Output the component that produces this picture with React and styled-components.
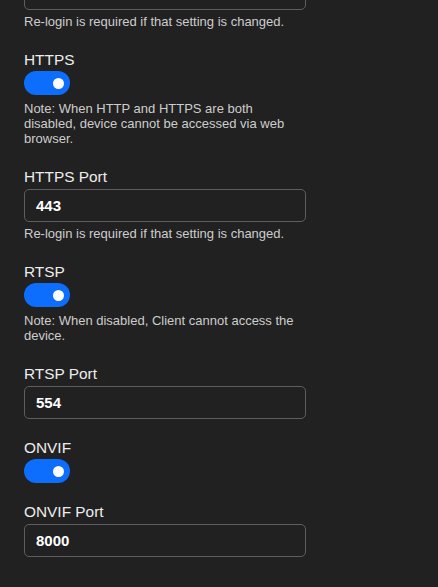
import React from "react";
import styled, { createGlobalStyle } from "styled-components";

const GlobalStyle = createGlobalStyle`
  html, body {
    margin: 0;
    padding: 0;
    background: #212121;
    overflow: hidden;
  }
  body {
    font-family: "Liberation Sans", Arial, Helvetica, sans-serif;
    color: #ececec;
  }
`;

const Page = styled.div`
  width: 438px;
  height: 587px;
  overflow: hidden;
  background: #212121;
`;

const Form = styled.div`
  width: 282px;
  margin: -23px 0 0 24px;
  display: flex;
  flex-direction: column;
`;

const Group = styled.div`
  display: flex;
  flex-direction: column;
  margin-bottom: 20px;
`;

const Label = styled.label`
  font-size: 15.4px;
  line-height: 18px;
  color: #ededed;
  margin-bottom: ${(p) => (p.$toggle ? "2px" : "3px")};
`;

const Input = styled.input`
  box-sizing: border-box;
  width: 282px;
  height: 33px;
  margin: 0;
  padding: 0 11px;
  background: #212121;
  border: 1px solid #5e5e5e;
  border-radius: 5px;
  color: #ffffff;
  font-family: "Liberation Sans", Arial, sans-serif;
  font-size: 15px;
  font-weight: 700;
  outline: none;
`;

const Help = styled.div`
  font-size: 13px;
  line-height: 15px;
  color: #cdcdcd;
  margin-top: ${(p) => (p.$afterToggle ? "6px" : "4px")};
  margin-bottom: 2px;
`;

const Switch = styled.span`
  position: relative;
  display: block;
  width: 46px;
  height: 24px;
  border-radius: 12px;
  background: #0d6efd;
  flex: none;
  &::after {
    content: "";
    position: absolute;
    top: 6.5px;
    right: 6.5px;
    width: 11px;
    height: 11px;
    border-radius: 50%;
    background: #ffffff;
  }
`;

const fields = [
  { type: "input", value: "", help: "Re-login is required if that setting is changed." },
  { type: "toggle", label: "HTTPS", help: "Note: When HTTP and HTTPS are both disabled, device cannot be accessed via web browser." },
  { type: "input", label: "HTTPS Port", value: "443", help: "Re-login is required if that setting is changed." },
  { type: "toggle", label: "RTSP", help: "Note: When disabled, Client cannot access the device." },
  { type: "input", label: "RTSP Port", value: "554" },
  { type: "toggle", label: "ONVIF" },
  { type: "input", label: "ONVIF Port", value: "8000" },
];

export default function App() {
  return (
    <Page>
      <GlobalStyle />
      <Form>
        {fields.map((f, i) => (
          <Group key={i}>
            {f.label && <Label $toggle={f.type === "toggle"}>{f.label}</Label>}
            {f.type === "input" ? (
              <Input defaultValue={f.value} readOnly />
            ) : (
              <Switch role="switch" aria-checked="true" />
            )}
            {f.help && <Help $afterToggle={f.type === "toggle"}>{f.help}</Help>}
          </Group>
        ))}
      </Form>
    </Page>
  );
}
